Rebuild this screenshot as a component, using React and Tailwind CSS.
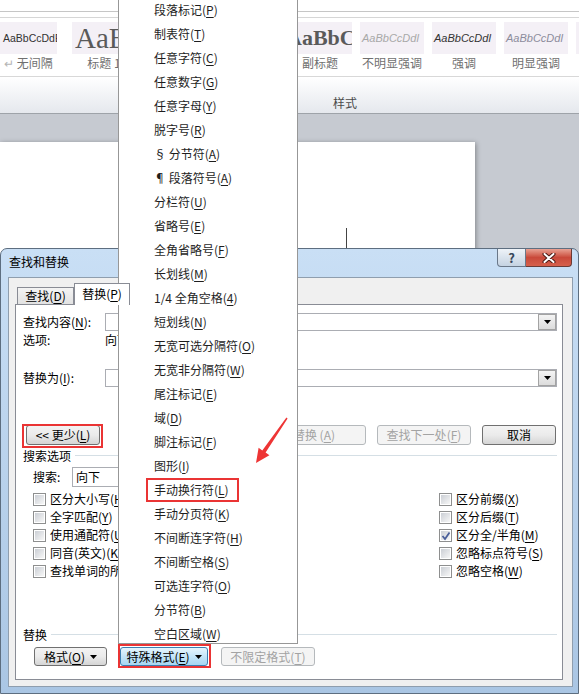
const menuItems = [
  ["段落标记", "P"],
  ["制表符", "T"],
  ["任意字符", "C"],
  ["任意数字", "G"],
  ["任意字母", "Y"],
  ["脱字号", "R"],
  ["§ 分节符", "A"],
  ["¶ 段落符号", "A"],
  ["分栏符", "U"],
  ["省略号", "E"],
  ["全角省略号", "F"],
  ["长划线", "M"],
  ["1/4 全角空格", "4"],
  ["短划线", "N"],
  ["无宽可选分隔符", "O"],
  ["无宽非分隔符", "W"],
  ["尾注标记", "E"],
  ["域", "D"],
  ["脚注标记", "F"],
  ["图形", "I"],
  ["手动换行符", "L"],
  ["手动分页符", "K"],
  ["不间断连字符", "H"],
  ["不间断空格", "S"],
  ["可选连字符", "O"],
  ["分节符", "B"],
  ["空白区域", "W"],
];

const leftChecks = [
  ["区分大小写", "H"],
  ["全字匹配", "Y"],
  ["使用通配符", "U"],
  ["同音(英文)", "K"],
  ["查找单词的所有形式(英文)", "W"],
];

const rightChecks = [
  ["区分前缀", "X", false],
  ["区分后缀", "T", false],
  ["区分全/半角", "M", true],
  ["忽略标点符号", "S", false],
  ["忽略空格", "W", false],
];

const Acc = ({ k }) => (
  <>
    (<span className="underline underline-offset-[2px]">{k}</span>)
  </>
);

const StyleItem = ({ className, label, children }) => (
  <div className={`shrink-0 flex flex-col ${className}`}>
    <div className="h-[32px] bg-[#f4f0f6] flex items-center overflow-hidden whitespace-nowrap">
      {children}
    </div>
    <div className="mt-[2px] h-[14px] text-center text-[#707070] whitespace-nowrap overflow-hidden">
      {label}
    </div>
  </div>
);

const Triangle = () => (
  <svg width="7" height="4" viewBox="0 0 7 4">
    <path d="M0 0h7L3.5 4z" fill="#000" />
  </svg>
);

const Combo = ({ className = "", children }) => (
  <div className={`h-[18px] border border-[#abadb3] bg-white flex items-center ${className}`}>
    <div className="flex-1 pl-[3px] whitespace-nowrap overflow-hidden">{children}</div>
    <div className="w-[18px] h-[16px] border border-[#a3a3a3] bg-gradient-to-b from-[#f4f4f4] to-[#dcdcdc] flex items-center justify-center">
      <Triangle />
    </div>
  </div>
);

const Btn = ({ children, className = "", disabled }) => (
  <div
    className={`shrink-0 flex items-center justify-center rounded-[3px] border whitespace-nowrap ${
      disabled
        ? "border-[#b5b9bc] bg-[#f4f4f4] text-[#a3a3a3]"
        : "border-[#707070] bg-gradient-to-b from-[#f3f3f3] via-[#ebebeb] to-[#d5d5d5] text-black"
    } ${className}`}
  >
    {children}
  </div>
);

const Check = ({ checked }) => (
  <div className="relative w-[13px] h-[13px] shrink-0 border border-[#8e8f8f] bg-white p-px">
    <div className="w-full h-full bg-gradient-to-br from-[#cbcfd5] to-[#f7f7f7]" />
    {checked && (
      <svg className="absolute left-[1px] top-[1px]" width="10" height="10" viewBox="0 0 10 10">
        <path d="M1.5 5 L4 8 L8.5 1.5" fill="none" stroke="#4a5f9a" strokeWidth="1.8" />
      </svg>
    )}
  </div>
);

const Ribbon = () => (
  <div className="bg-white">
    <div className="h-[12px] border-b border-[#c6c6c6]" />
    <div className="h-[6px] border-b border-[#d6d6d6]" />

    {/* Style gallery */}
    <div className="h-[59px] border-b border-[#d8d8d8] flex items-start pt-[4px] overflow-hidden">
      <StyleItem
        className="w-[57px]"
        label={
          <>
            <span className="text-[#b5b5b5]">↵</span> 无间隔
          </>
        }
      >
        <span className="pl-[3px] font-['Liberation_Sans',sans-serif] text-[10.5px] text-[#333]">AaBbCcDdE</span>
      </StyleItem>
      <StyleItem className="w-[64px] ml-[15px]" label="标题 1">
        <span className="pl-[3px] font-['Liberation_Serif',serif] text-[29px] leading-[30px] text-[#5a5a5a]">AaB</span>
      </StyleItem>
      {/* hidden under the menu */}
      <StyleItem className="w-[64px] ml-[8px]" label="" />
      <StyleItem className="w-[64px] ml-[8px]" label="" />
      <StyleItem className="w-[64px] ml-[8px]" label="副标题">
        <span className="-ml-[2px] font-['Liberation_Serif',serif] font-bold text-[22px] text-[#5a5a5a]">AaBbCc</span>
      </StyleItem>
      <StyleItem className="w-[64px] ml-[8px]" label="不明显强调">
        <span className="pl-[2px] font-['Liberation_Sans',sans-serif] italic text-[11px] text-[#a8a8a8]">AaBbCcDdl</span>
      </StyleItem>
      <StyleItem className="w-[64px] ml-[8px]" label="强调">
        <span className="pl-[2px] font-['Liberation_Sans',sans-serif] italic text-[11px] text-[#333]">AaBbCcDdl</span>
      </StyleItem>
      <StyleItem className="w-[64px] ml-[8px]" label="明显强调">
        <span className="pl-[2px] font-['Liberation_Sans',sans-serif] italic text-[11px] text-[#8c8c9c]">AaBbCcDdl</span>
      </StyleItem>
      <StyleItem className="w-[64px] ml-[8px]" label="" />
    </div>

    <div className="h-[36px] bg-gradient-to-b from-white to-[#e5e8ed] flex items-end pb-[3px] pl-[333px] text-[#4a4a4a]">
      样式
    </div>
    <div className="h-px bg-[#9ea3a9]" />
  </div>
);

const Workspace = () => (
  <div className="h-[580px] pt-[28px]">
    <div className="w-[475px] h-[560px] bg-white shadow-[1px_1px_5px_rgba(0,0,0,0.35)] pl-[346px] pt-[86px]">
      <div className="w-px h-[20px] bg-[#444]" />
    </div>
  </div>
);

const Dialog = () => (
  <div className="absolute left-0 top-[248px] w-[579px] h-[446px] rounded-t-[7px] border border-[#5d6e80] bg-gradient-to-b from-[#c9dff5] via-[#b9d2ec] to-[#aac6e4] flex flex-col">
    {/* Title bar */}
    <div className="h-[28px] shrink-0 flex items-start">
      <div className="flex-1 pl-[8px] pt-[6px]">查找和替换</div>
      <div className="flex mr-[6px]">
        <div className="w-[29px] h-[18px] rounded-bl-[4px] border border-t-0 border-[#6a7889] bg-gradient-to-b from-[#eef3f8] to-[#c5d3e2] flex items-center justify-center font-bold text-[13px] text-[#37475a]">
          ?
        </div>
        <div className="w-[46px] h-[18px] rounded-br-[4px] border border-t-0 border-l-0 border-[#6a3a35] bg-gradient-to-b from-[#e8a193] via-[#c9493a] to-[#d6604c] flex items-center justify-center">
          <svg width="14" height="10" viewBox="0 0 14 10">
            <path d="M2.5 1 L11.5 9 M11.5 1 L2.5 9" stroke="#4b1a14" strokeWidth="4" strokeLinecap="round" />
            <path d="M2.5 1 L11.5 9 M11.5 1 L2.5 9" stroke="#fff" strokeWidth="2" strokeLinecap="round" />
          </svg>
        </div>
      </div>
    </div>

    {/* Client */}
    <div className="flex-1 ml-[7px] mr-[5px] mb-[6px] border border-[#8f9eae] bg-[#f0f0f0] flex flex-col pt-[5px]">
      <div className="h-[21px] shrink-0 flex items-end pl-[8px]">
        <div className="h-[17px] w-[57px] border border-b-0 border-[#898c95] bg-gradient-to-b from-[#f4f4f4] to-[#e2e2e2] flex items-center justify-center">
          查找<Acc k="D" />
        </div>
        <div className="relative z-10 -mb-px h-[22px] w-[56px] border border-b-0 border-[#898c95] bg-white flex justify-center pt-[3px]">
          替换<Acc k="P" />
        </div>
      </div>

      {/* Tab panel */}
      <div className="h-[376px] ml-[6px] mr-[9px] border border-[#898c95] bg-white flex flex-col">
        <div className="mt-[8px] h-[18px] flex items-center pl-[7px] pr-[5px]">
          <div className="w-[82px]">
            查找内容<Acc k="N" />:
          </div>
          <Combo className="flex-1" />
        </div>
        <div className="h-[17px] flex items-center pl-[7px]">
          <div className="w-[82px]">选项:</div>
          <div>向下, 区分全/半角</div>
        </div>
        <div className="mt-[21px] h-[18px] flex items-center pl-[7px] pr-[5px]">
          <div className="w-[82px]">
            替换为<Acc k="I" />:
          </div>
          <Combo className="flex-1" />
        </div>

        {/* Buttons */}
        <div className="mt-[38px] h-[20px] flex pl-[10px] pr-[6px]">
          <Btn className="w-[74px] h-[20px]">
            &lt;&lt; 更少<Acc k="L" />
          </Btn>
          <div className="ml-auto flex gap-[11px]">
            <Btn className="w-[94px] h-[20px]" disabled>
              替换<Acc k="R" />
            </Btn>
            <Btn className="w-[94px] h-[20px] justify-end pr-[30px]" disabled>
              全部替换 <Acc k="A" />
            </Btn>
            <Btn className="w-[94px] h-[20px]" disabled>
              查找下一处<Acc k="F" />
            </Btn>
            <Btn className="w-[74px] h-[20px]">取消</Btn>
          </div>
        </div>

        {/* Search options */}
        <div className="mt-[4px] h-[14px] flex items-center pl-[7px] pr-[5px]">
          <span>搜索选项</span>
          <div className="flex-1 h-px bg-[#d5dfe5] ml-[4px] -mt-[1px]" />
        </div>
        <div className="mt-[4px] h-[20px] flex items-center pl-[17px]">
          <div className="w-[39px]">搜索:</div>
          <Combo className="w-[110px] h-[20px]">向下</Combo>
        </div>
        <div className="mt-[3px] flex pl-[17px]">
          <div className="w-[406px] flex flex-col">
            {leftChecks.map(([t, k]) => (
              <div key={t} className="h-[18px] flex items-center gap-[4px] whitespace-nowrap">
                <Check />
                <span>
                  {t}
                  <Acc k={k} />
                </span>
              </div>
            ))}
          </div>
          <div className="flex flex-col">
            {rightChecks.map(([t, k, c]) => (
              <div key={t} className="h-[18px] flex items-center gap-[4px] whitespace-nowrap">
                <Check checked={c} />
                <span>
                  {t}
                  <Acc k={k} />
                </span>
              </div>
            ))}
          </div>
        </div>

        {/* Replace group */}
        <div className="mt-[48px] h-[14px] flex items-center pl-[7px] pr-[5px]">
          <span>替换</span>
          <div className="flex-1 h-px bg-[#d5dfe5] ml-[4px] -mt-[1px]" />
        </div>
        <div className="mt-[5px] flex pl-[18px] gap-[13px]">
          <Btn className="w-[73px] h-[19px] gap-[5px]">
            <span>
              格式<Acc k="O" />
            </span>
            <Triangle />
          </Btn>
          <div className="w-[88px] h-[19px] shrink-0 flex items-center justify-center gap-[5px] rounded-[3px] border border-[#3c7fb1] bg-gradient-to-b from-[#e6f5fd] via-[#c4e5f8] to-[#a6d6f2]">
            <span>
              特殊格式<Acc k="E" />
            </span>
            <Triangle />
          </div>
          <Btn className="w-[94px] h-[19px]" disabled>
            不限定格式<Acc k="T" />
          </Btn>
        </div>
      </div>
    </div>
  </div>
);

const Menu = () => (
  <div className="absolute left-[118px] top-[-2px] w-[180px] h-[646px] overflow-hidden bg-white border-x border-b border-[#979797] flex flex-col">
    {menuItems.map(([t, k], i) => (
      <div key={i} className="h-[24px] shrink-0 flex items-center pl-[35px] text-[12px] text-[#1e1e1e] whitespace-nowrap">
        {t}
        <Acc k={k} />
      </div>
    ))}
  </div>
);

const Annotations = () => (
  <>
    <div className="absolute left-[22px] top-[424px] w-[81px] h-[24px] border-2 border-[#ea3434]" />
    <div className="absolute left-[146px] top-[478px] w-[93px] h-[24px] border-2 border-[#ea3434]" />
    <div className="absolute left-[118px] top-[644px] w-[93px] h-[24px] border-2 border-[#ea3434]" />
    <svg className="absolute left-0 top-0 pointer-events-none" width="579" height="694" viewBox="0 0 579 694">
      <polygon
        points="287.6,418.4 265.6,452.6 269.4,455.3 256,463 258.6,447.8 262.3,450.4 286.4,417.6"
        fill="#ee3535"
      />
    </svg>
  </>
);

export default function App() {
  return (
    <div className="relative w-[579px] h-[694px] overflow-hidden bg-[#c6cad1] font-['Noto_Sans_CJK_SC',sans-serif] text-[12px] leading-[14px] text-black">
      <Ribbon />
      <Workspace />
      <Dialog />
      <Menu />
      <Annotations />
    </div>
  );
}
